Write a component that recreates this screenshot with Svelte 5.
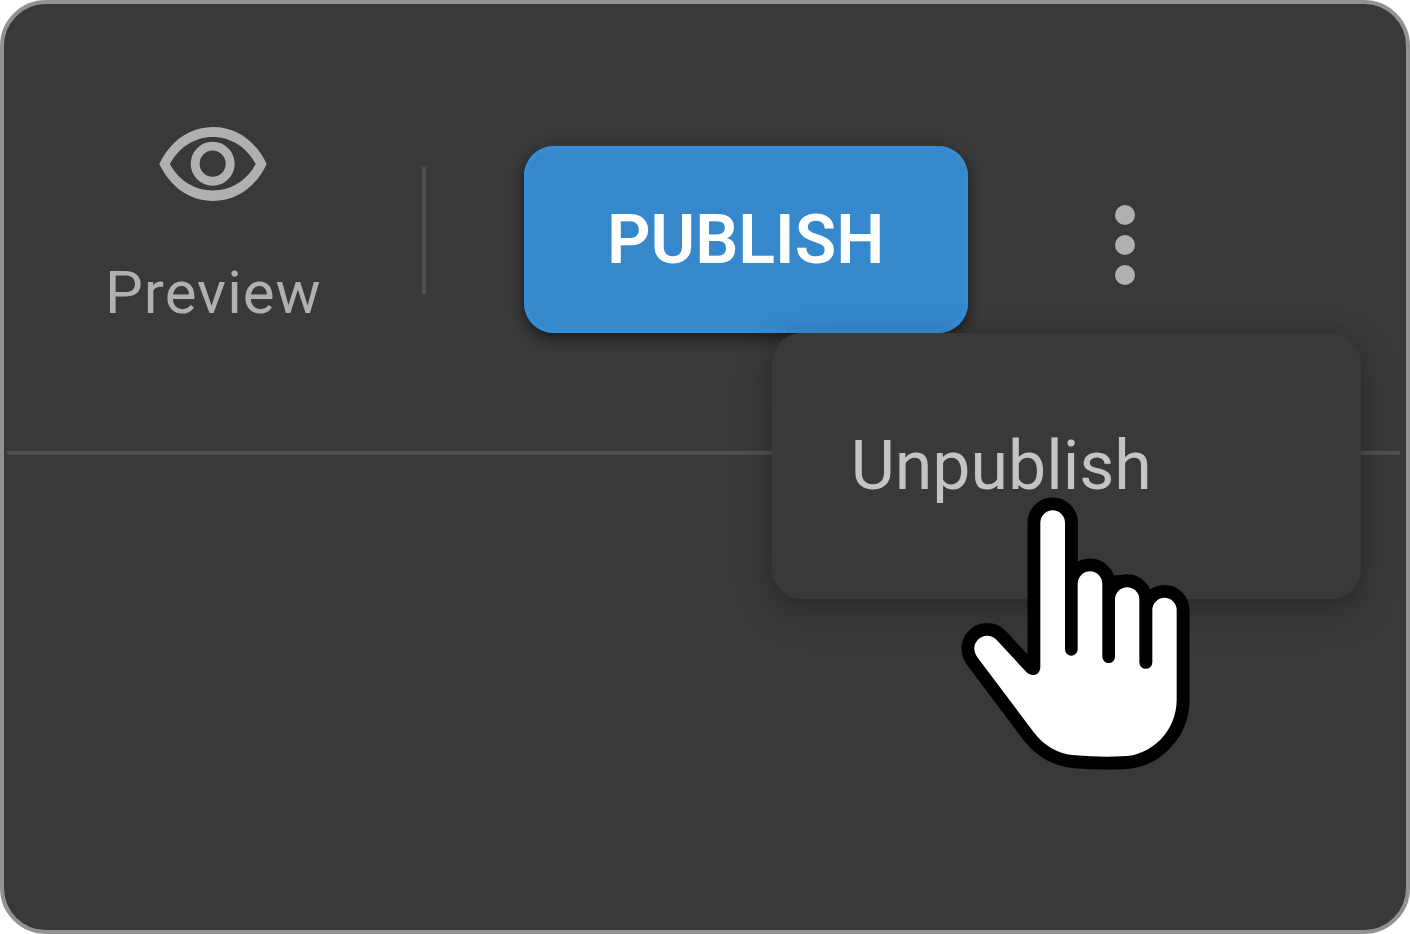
<script>
  let open = $state(true);
</script>

<main class="frame">
  <header class="toolbar">
    <button class="preview" type="button">
      <svg class="eye" viewBox="208 51 325 224" aria-hidden="true">
        <path
          fill-rule="evenodd"
          d="M208 163C240 95 300 51 371 51S502 95 533 163C502 231 442 275 371 275S240 231 208 163ZM240 163C268 112 315 81 370 81S472 112 500 163C472 214 425 243 370 243S268 214 240 163Z"
        />
        <circle cx="369.500" cy="162" r="53" />
      </svg>
      <span>Preview</span>
    </button>
    <div class="divider"></div>
    <div class="actions">
      <button class="publish" type="button">PUBLISH</button>
      <div class="more">
        <button class="kebab" type="button" aria-label="More actions" aria-expanded={open} onclick={() => (open = !open)}>
          <svg viewBox="0 0 20 80" aria-hidden="true">
            <circle cx="10" cy="10" r="10" />
            <circle cx="10" cy="40" r="10" />
            <circle cx="10" cy="70" r="10" />
          </svg>
        </button>
        {#if open}
          <div class="menu" role="menu">
            <button type="button" role="menuitem">Unpublish</button>
            <svg class="pointer" viewBox="0 0 840 900" aria-hidden="true">
              <path class="knuckle" d="M505 286Q550 284 580 286V320H505Z" />
              <path
                class="hand"
                d="M301 128A37 37 0 0 1 375 128V508A19 19 0 0 0 413 508V311A37 37 0 0 1 487 311V530A19 19 0 0 0 525 530V358A36 36 0 0 1 598 358V547A19 19 0 0 0 637 547V390A36 36 0 0 1 710 390V660C710 752 635 829 545 829Q480 832 405 826C350 821 311 796 280 755L112 532C100 515 100 495 111 482C127 464 152 462 170 480L257 574C274 594 301 586 301 560Z"
              />
            </svg>
          </div>
        {/if}
      </div>
    </div>
  </header>
</main>

<style>
  :global(body) {
    margin: 0;
    background: #fff;
  }

  .frame {
    box-sizing: border-box;
    min-height: 100vh;
    border: 4px solid #929292;
    border-radius: 46px;
    background: #393939;
    font-family: Roboto, sans-serif;
    padding: 0 6px 0 3px;
  }

  button {
    border: 0;
    padding: 0;
    background: none;
    font: inherit;
    cursor: pointer;
  }

  .toolbar {
    display: flex;
    align-items: center;
    min-height: 447px;
    border-bottom: 4px solid #505050;
  }

  .preview {
    display: flex;
    flex-direction: column;
    align-items: center;
    gap: 56px;
    margin-left: 98px;
    color: #b0b0b0;
    font-size: 60px;
    font-weight: 450;
    line-height: 72px;
    letter-spacing: 1px;
  }

  .eye {
    display: block;
    width: 108px;
    height: 74px;
    fill: #b0b0b0;
  }

  .eye circle {
    fill: none;
    stroke: #b0b0b0;
    stroke-width: 27;
  }

  .divider {
    width: 4px;
    height: 127px;
    margin: 6px 98px 0 100px;
    background: #505050;
  }

  .actions {
    display: flex;
    align-items: center;
    gap: 147px;
    margin-top: 24px;
  }

  .publish {
    width: 444px;
    height: 187px;
    border-radius: 30px;
    background: #3588cc;
    box-shadow:
      inset 0 0 0 4px #368dd5,
      0 6px 12px rgba(0, 0, 0, 0.4),
      0 2px 16px rgba(0, 0, 0, 0.15);
    color: #fff;
    font-size: 68px;
    font-weight: 600;
    line-height: 80px;
  }

  .more {
    position: relative;
    padding-top: 11px;
  }

  .kebab,
  .kebab svg {
    display: block;
    width: 20px;
    height: 80px;
    fill: #b0b0b0;
  }

  .menu {
    position: absolute;
    top: 139px;
    right: -226px;
    box-sizing: border-box;
    width: 589px;
    padding: 92px 79px;
    border-radius: 30px;
    background: #393939;
    box-shadow:
      0 12px 40px rgba(0, 0, 0, 0.2),
      0 4px 16px rgba(0, 0, 0, 0.12);
  }

  .menu button {
    display: block;
    color: #c4c4c4;
    font-size: 68px;
    font-weight: 450;
    line-height: 82px;
  }

  .pointer {
    position: absolute;
    top: 147px;
    left: 168px;
    width: 280px;
    height: 300px;
    pointer-events: none;
  }

  .hand {
    fill: #fff;
    stroke: #000;
    stroke-width: 77;
    stroke-linejoin: round;
    paint-order: stroke;
  }
</style>
